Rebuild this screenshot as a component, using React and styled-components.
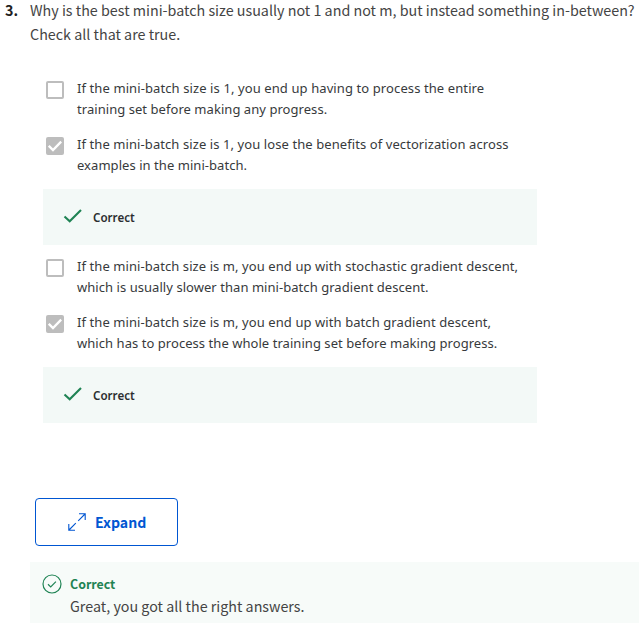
import React from "react";
import styled, { createGlobalStyle } from "styled-components";

const Global = createGlobalStyle`
  body { margin: 0; background: #fff; overflow: hidden; }
  * { box-sizing: border-box; }
`;
const SOURCE = `"Noto Sans CJK SC", "Noto Sans", sans-serif`;
const BODY = `"Noto Sans", "Open Sans", sans-serif`;

const Page = styled.main`
  width: 639px;
  height: 623px;
  overflow: hidden;
  color: #373a3c;
  font-family: ${SOURCE};
`;
const Question = styled.div`
  display: flex;
  height: 78px;
  padding-left: 5px;
  color: #444;
  font-size: 14.32px;
  line-height: 24px;
  white-space: nowrap;
`;
const Number = styled.div`
  width: 25px;
  flex: none;
  margin-top: -2px;
  font-weight: 700;
  color: #1f1f1f;
`;
const Prompt = styled.div`
  margin-top: -2px;
`;
const Options = styled.div`
  width: 494px;
  height: 420px;
  margin-left: 43px;
`;
const Option = styled.label`
  display: flex;
  height: 56px;
  padding-left: 3px;
`;
const Box = styled.span`
  display: flex;
  flex: none;
  width: 18px;
  height: 18px;
  margin: 3px 13px 0 0;
  border: 2px solid #bdbdbd;
  border-radius: 2px;
  background: ${(p) => (p.$checked ? "#bdbdbd" : "#fff")};
`;
const OptionText = styled.span`
  font: 13px/21px ${BODY};
  white-space: nowrap;
`;
const Line = styled.span`
  display: block;
  letter-spacing: ${(p) => p.$spacing}px;
`;
const Feedback = styled.div`
  display: flex;
  align-items: center;
  height: 56px;
  margin: -1px 0 11px;
  padding-left: 20px;
  gap: 10px;
  background: #f3f9f7;
  color: #2b2e30;
  font: 600 11.6px/20px ${BODY};
`;
const FeedbackText = styled.span`
  padding-top: 2px;
`;
const ExpandButton = styled.button`
  display: flex;
  align-items: center;
  width: 143px;
  height: 48px;
  margin: 0 0 16px 35px;
  padding: 0 0 0 32px;
  gap: 9px;
  border: 1px solid #0056d2;
  border-radius: 4px;
  background: #fff;
  color: #0056d2;
  font: 700 14.1px/24px ${SOURCE};
`;
const Result = styled.section`
  display: flex;
  height: 61px;
  margin-left: 30px;
  padding: 12px 0 0 12px;
  gap: 8px;
  background: #f7fbf9;
`;
const ResultTitle = styled.div`
  color: #1f8354;
  font-size: 12.4px;
  font-weight: 700;
  line-height: 21px;
`;
const ResultText = styled.div`
  color: #444;
  font-size: 14.3px;
  line-height: 22px;
`;

function Choice({ checked, lines, spacing }) {
  return (
    <Option>
      <Box $checked={checked}>
        {checked && (
          <svg width="14" height="14" viewBox="0 0 14 14" fill="none" stroke="#fff" strokeWidth="2.3">
            <path d="M.8 6.8 5 11 13.2 2.6" />
          </svg>
        )}
      </Box>
      <OptionText>
        <Line $spacing={spacing}>{lines[0]}</Line>
        <Line $spacing={0.05}>{lines[1]}</Line>
      </OptionText>
    </Option>
  );
}

function CorrectNote() {
  return (
    <Feedback>
      <svg width="20" height="20" viewBox="0 0 20 20" fill="none" stroke="#1f8354" strokeWidth="2.1">
        <path d="M1.5 9.5 6.7 14.2 18 3" />
      </svg>
      <FeedbackText>Correct</FeedbackText>
    </Feedback>
  );
}

export default function App() {
  return (
    <Page>
      <Global />
      <Question>
        <Number>3.</Number>
        <Prompt>
          Why is the best mini-batch size usually not 1 and not m, but instead something in-between?
          <br />
          Check all that are true.
        </Prompt>
      </Question>
      <Options>
        <Choice spacing={0.1} lines={["If the mini-batch size is 1, you end up having to process the entire", "training set before making any progress."]} />
        <Choice checked spacing={0.085} lines={["If the mini-batch size is 1, you lose the benefits of vectorization across", "examples in the mini-batch."]} />
        <CorrectNote />
        <Choice spacing={0.08} lines={["If the mini-batch size is m, you end up with stochastic gradient descent,", "which is usually slower than mini-batch gradient descent."]} />
        <Choice checked spacing={0.08} lines={["If the mini-batch size is m, you end up with batch gradient descent,", "which has to process the whole training set before making progress."]} />
        <CorrectNote />
      </Options>
      <ExpandButton>
        <svg width="18" height="18" viewBox="0 0 18 18" fill="none" stroke="#0056d2" strokeWidth="1.1">
          <path d="M10.2 7.8 17 1M11 .8h6.2V7M7.8 10.2 1 17M.8 11v6.2H7" />
        </svg>
        <span>Expand</span>
      </ExpandButton>
      <Result>
        <svg width="20" height="20" viewBox="0 0 20 20" fill="none" stroke="#1f8354" strokeWidth="1.2">
          <circle cx="10" cy="10" r="9" />
          <path d="m6 10.3 2.7 2.6 5.2-5.3" />
        </svg>
        <div>
          <ResultTitle>Correct</ResultTitle>
          <ResultText>Great, you got all the right answers.</ResultText>
        </div>
      </Result>
    </Page>
  );
}
